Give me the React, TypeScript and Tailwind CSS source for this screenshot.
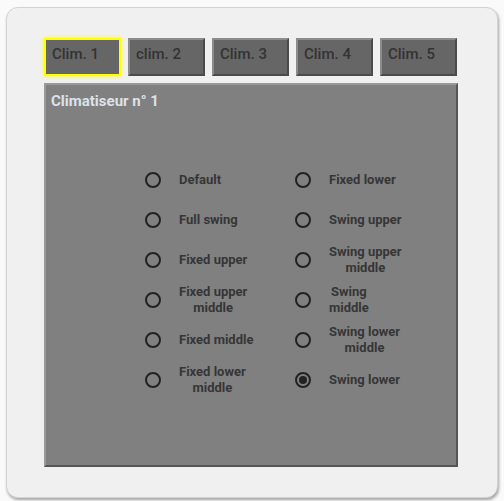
import React from "react";

const tabs = ["Clim. 1", "clim. 2", "Clim. 3", "Clim. 4", "Clim. 5"];
const options: [string, string][] = [
  ["Default", "Fixed lower"],
  ["Full swing", "Swing upper"],
  ["Fixed upper", "Swing upper\nmiddle"],
  ["Fixed upper\nmiddle", "Swing\nmiddle"],
  ["Fixed middle", "Swing lower\nmiddle"],
  ["Fixed lower\nmiddle", "Swing lower"],
];

function Radio({ label, checked }: { label: string; checked?: boolean }) {
  return (
    <div className="flex h-[40px] items-center">
      <div className="flex h-[16px] w-[16px] shrink-0 items-center justify-center rounded-full border-2 border-[#222]">
        {checked && <div className="h-[8px] w-[8px] rounded-full bg-[#222]" />}
      </div>
      <div className="ml-[18px] whitespace-pre-line text-center text-[13px] font-bold leading-[16px] text-[#363636]">
        {label}
      </div>
    </div>
  );
}

export default function App() {
  return (
    <div
      className="h-[501px] w-[504px] bg-[#fafafa] pl-[6px] pt-[7px]"
      style={{ fontFamily: "Roboto, 'Liberation Sans', sans-serif" }}
    >
      <div className="h-[491px] w-[492px] rounded-[12px] border border-[#d4d4d4] bg-[#f0f0f0] pl-[37px] pt-[30px] shadow-[1px_2px_3px_rgba(0,0,0,0.35)]">
        <div className="flex gap-[7px]">
          {tabs.map((t, i) => (
            <div
              key={t}
              className={
                i === 0
                  ? "h-[38px] w-[77px] border-2 border-[#ffff00] bg-[#666] pl-[6px] pt-[3px] text-[15px] font-medium text-[#333] shadow-[0_0_4px_#ffff00]"
                  : "h-[38px] w-[77px] border-2 border-b-[#4a4a4a] border-l-[#8c8c8c] border-r-[#4a4a4a] border-t-[#8c8c8c] bg-[#666] pl-[6px] pt-[3px] text-[15px] font-medium text-[#333]"
              }
            >
              {t}
            </div>
          ))}
        </div>
        <div className="mt-[7px] h-[384px] w-[414px] border-2 border-b-[#555] border-l-[#9a9a9a] border-r-[#555] border-t-[#9a9a9a] bg-[#808080]">
          <div className="pl-[5px] pt-[8px] text-[15px] font-bold leading-[16px] text-[#dde2e8]">
            Climatiseur n° 1
          </div>
          <div className="mt-[51px] grid grid-cols-[150px_150px] pl-[99px]">
            {options.map(([a, b]) => (
              <React.Fragment key={a}>
                <Radio label={a} />
                <Radio label={b} checked={b === "Swing lower"} />
              </React.Fragment>
            ))}
          </div>
        </div>
      </div>
    </div>
  );
}
